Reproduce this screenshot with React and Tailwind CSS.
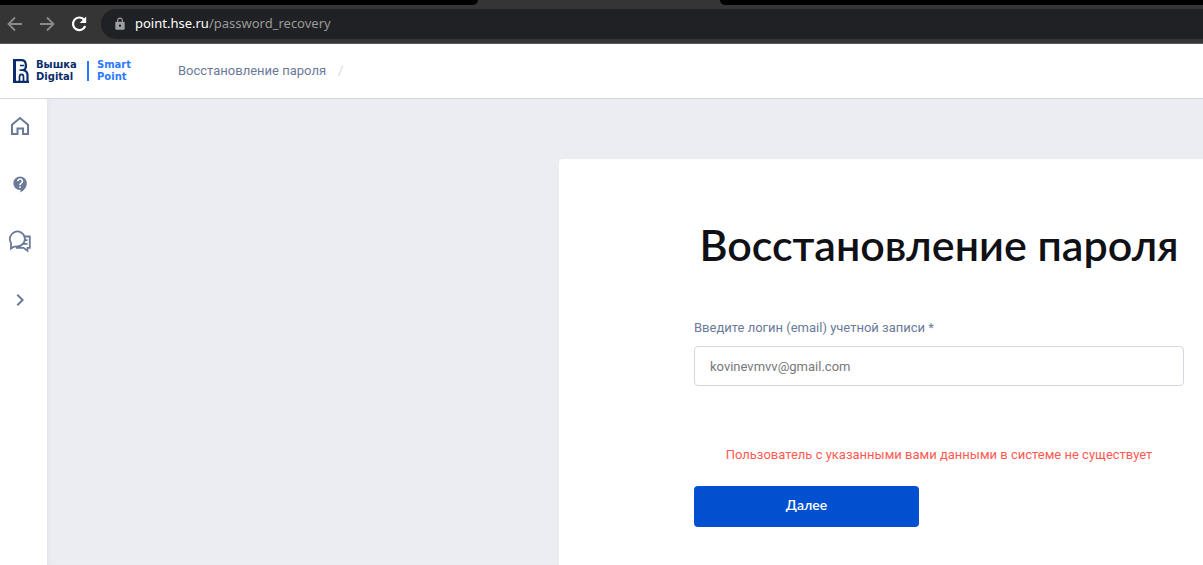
import { MdLock, MdRefresh, MdContactSupport, MdChevronRight } from "react-icons/md";

function BrowserBar() {
  return (
    <div className="bg-[#353535] border-b border-[#5b5b5b]">
      <div className="flex h-[5px]">
        <div className="w-[478px] shrink-0 rounded-br-md bg-black" />
        <div className="w-[242px] shrink-0" />
        <div className="flex-1 rounded-bl-md bg-black" />
      </div>
      <div className="flex h-[38px] items-center">
        <button type="button" aria-label="Назад" className="ml-1.5 text-[#8b8b8b]">
          <Arrow />
        </button>
        <button type="button" aria-label="Вперёд" className="ml-3.5 rotate-180 text-[#8b8b8b]">
          <Arrow />
        </button>
        <button type="button" aria-label="Обновить" className="ml-[13px] text-white">
          <ReloadIcon />
        </button>
        <button
          type="button"
          className="ml-3 flex h-[30px] flex-1 items-center gap-2 rounded-l-full bg-[#202124] pl-3 text-left font-['Noto_Sans',sans-serif] text-[13px] text-[#9a9a98]"
        >
          <MdLock size={14} className="text-[#9aa0a6]" />
          <span>
            <span className="text-white">point.hse.ru</span>/password_recovery
          </span>
        </button>
      </div>
    </div>
  );
}

function Arrow() {
  return (
    <svg width="18" height="18" viewBox="0 0 18 18" fill="none" stroke="currentColor" strokeWidth="1.800">
      <path d="M16 9H3M9 2.500 2.500 9 9 15.500" />
    </svg>
  );
}

function ReloadIcon() {
  return (
    <svg width="20" height="20" viewBox="0 0 20 20" fill="none" stroke="currentColor" strokeWidth="2.200">
      <path d="M15 5.600A6.300 6.300 0 1 0 16.200 12" />
      <path d="M17.200 2.500V9H10.700z" fill="currentColor" stroke="none" />
    </svg>
  );
}

function LogoMark() {
  return (
    <svg width="16" height="25" viewBox="0 0 16 25" fill="none" stroke="#0b2d6b">
      <path d="M1.500 0V24" strokeWidth="3" />
      <path d="M0 1.200H8.500C14 1.200 14 9.500 10.500 11.200C13.500 12 14.500 14 14.500 16V24M0 22.900H16" strokeWidth="2.200" />
      <path d="M7 6.500H11M6.500 11.200H11M6.500 23V18C6.500 14.500 10.500 14.500 10.500 18V23" strokeWidth="1.700" />
    </svg>
  );
}

function Header() {
  return (
    <header className="flex h-[55px] items-center border-b border-[#d3d6e3] bg-white pl-[13px]">
      <a href="/" className="flex items-center font-['DejaVu_Sans',sans-serif] text-[10px] leading-3 font-bold">
        <LogoMark />
        <span className="ml-[7px] flex w-[44px] flex-col text-[#0b2d6b]">
          <span>Вышка</span>
          <span>Digital</span>
        </span>
        <span className="ml-[7px] h-5 w-0.5 bg-[#2b79ff]" />
        <span className="ml-2 flex w-[37px] flex-col text-[#2b79ff]">
          <span>Smart</span>
          <span>Point</span>
        </span>
      </a>
      <nav aria-label="Путь" className="ml-11 flex gap-3 font-['Roboto',sans-serif] text-[13px] text-[#6b7a99]">
        <a href="/password_recovery">Восстановление пароля</a>
        <span className="text-[#d3d6e3]">/</span>
      </nav>
    </header>
  );
}

function HomeIcon() {
  return (
    <svg width="20" height="20" viewBox="0 0 20 20" fill="none" stroke="currentColor" strokeWidth="2">
      <path d="M2 18V8.800L10 2l8 6.800V18h-5v-5.500H7.500V18z" />
    </svg>
  );
}

function ChatIcon() {
  return (
    <svg width="24" height="24" viewBox="0 0 24 24" fill="none" stroke="currentColor" strokeWidth="1.800">
      <path d="M3 18.500V13A7.500 7.500 0 1 1 9.500 16.500C7 16.200 5 16.800 3 18.500z" />
      <path d="M16.500 6.500H21.800V17.800H19.500V20.800L15.500 17.800H8M16 10.200H19.500M14 13.800H19.500" />
    </svg>
  );
}

function Sidebar() {
  return (
    <nav aria-label="Меню" className="flex w-[47px] shrink-0 flex-col gap-[34px] bg-white pt-[15px] pl-2 text-[#6b7a99]">
      <a href="/" aria-label="Главная" className="flex size-6 items-center justify-center">
        <HomeIcon />
      </a>
      <a href="/help" aria-label="Помощь" className="flex size-6 items-center justify-center">
        <MdContactSupport size={19} />
      </a>
      <a href="/chat" aria-label="Чат" className="flex size-6 items-center justify-center">
        <ChatIcon />
      </a>
      <button type="button" aria-label="Развернуть" className="flex size-6 items-center justify-center">
        <MdChevronRight size={24} />
      </button>
    </nav>
  );
}

function RecoveryForm() {
  return (
    <form className="w-[490px] max-w-none font-['Roboto',sans-serif] text-[13px]">
      <h1 className="text-center font-['Lato',sans-serif] text-[43px] leading-[52px] font-semibold whitespace-nowrap text-[#101116]">
        Восстановление пароля
      </h1>
      <label htmlFor="login" className="mt-[47px] block leading-5 text-[#6b7a99]">
        Введите логин (email) учетной записи *
      </label>
      <input
        id="login"
        type="email"
        defaultValue="kovinevmvv@gmail.com"
        className="mt-2 block h-10 w-full rounded border border-[#d3d6e3] bg-white px-[15px] text-[#77787a]"
      />
      <p role="alert" className="mt-[59px] text-center leading-5 whitespace-nowrap text-[#ff5a52]">
        Пользователь с указанными вами данными в системе не существует
      </p>
      <button
        type="button"
        className="mt-[21px] block h-[41px] w-[225px] rounded bg-[#0050cf] pb-1 font-['Lato',sans-serif] text-sm font-semibold text-white"
      >
        Далее
      </button>
    </form>
  );
}

export default function App() {
  return (
    <div className="flex min-h-screen flex-col overflow-hidden font-['Lato',sans-serif]">
      <BrowserBar />
      <Header />
      <div className="flex flex-1">
        <Sidebar />
        <main className="flex min-w-0 flex-1 bg-[#ecedf3] pt-[60px] pl-[512px] shadow-[inset_4px_0_4px_-2px_#e2e4ec]">
          <section className="min-w-0 flex-1 rounded-tl bg-white pt-[60px] pb-9 pl-[135px]">
            <RecoveryForm />
          </section>
        </main>
      </div>
    </div>
  );
}
